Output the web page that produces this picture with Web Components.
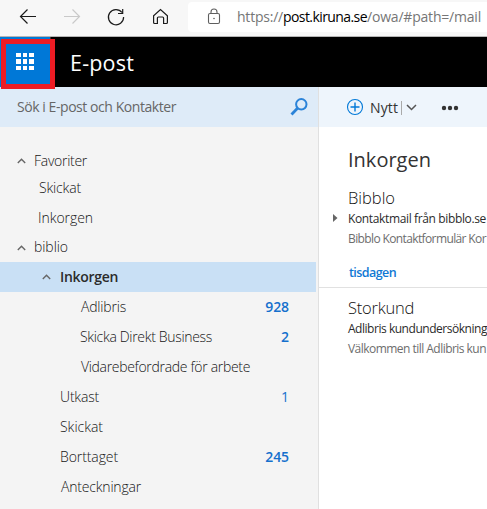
<!DOCTYPE html>
<html lang="sv">
<head>
<meta charset="utf-8">
<title>E-post</title>
<style>
html,body{margin:0;height:100%;overflow:hidden;background:#fff}
body{font-family:"Open Sans","Noto Sans",sans-serif;font-size:14px;color:#333}
</style>
</head>
<body>
<mail-app></mail-app>
<script>
function define(name, html, after) {
  const t = document.createElement('template');
  t.innerHTML = html;
  customElements.define(name, class extends HTMLElement {
    connectedCallback() {
      if (this.shadowRoot) return;
      this.attachShadow({mode: 'open'}).appendChild(t.content.cloneNode(true));
      if (after) after(this, this.shadowRoot);
    }
  });
}

/* A single-line label whose tracking is adjusted to a set width. */
define('fit-text', `<style>:host{display:inline-block;white-space:pre;flex:none}</style><slot></slot>`, host => {
  const w = parseFloat(host.getAttribute('w'));
  const n = host.textContent.length;
  const natural = host.getBoundingClientRect().width;
  if (w && natural) host.style.letterSpacing = ((w - natural) / n).toFixed(3) + 'px';
});

define('browser-bar', `<style>
:host{display:flex;height:36px;background:#f7f7f7;border-bottom:1px solid #b5b5b5;box-sizing:content-box;overflow:hidden}
.nav{width:188px;flex:none}
.field{flex:none;width:330px;height:30px;margin-top:2px;background:#fff;border-radius:4px;display:flex;align-items:center;font-size:14px;color:#767676}
.lock{width:49px;height:30px;flex:none}
.dom{color:#000}
fit-text{position:relative;top:-1px}
</style>
<svg class="nav" height="36" viewBox="0 0 188 36" fill="none" stroke="#1b1b1b" stroke-width="1.2">
<path d="M36 16.500H20.500M27.500 9.500l-7 7 7 7"/>
<path d="M64 16.500h15.500M72.500 9.500l7 7-7 7" stroke="#c9c9c9"/>
<path d="M122 12.500A7.600 7.600 0 1 0 123.600 17M122.700 9v4.500h-4.700"/>
<path d="M153.600 22.500v-6.800l6.900-6.200 6.900 6.200v6.800q0 1-1 1h-2.800v-5.500q0-1-1-1h-4.200q-1 0-1 1v5.500h-2.800q-1 0-1-1z"/>
</svg>
<div class="field">
<svg class="lock" viewBox="0 0 49 30" fill="none" stroke="#5f5f5f" stroke-width="1.1"><rect x="20.500" y="11.500" width="11" height="10" rx="1.500"/><path d="M23 11.500V10a3 3 0 0 1 6 0v1.500"/><circle cx="26" cy="16.500" r=".8" fill="#5f5f5f" stroke="none"/></svg>
<fit-text w="46">https://</fit-text><fit-text class="dom" w="84">post.kiruna.se</fit-text><fit-text w="114">/owa/#path=/mail</fit-text>
</div>`);

define('app-header', `<style>
:host{display:flex;height:50px;background:#000;color:#fff;position:relative;z-index:1;align-items:center;font-size:21.500px}
.launch{width:50px;height:50px;background:#0078d7;border-right:1px solid #3b3632;flex:none;margin-right:19px}
.mark{position:absolute;left:1px;top:2px;width:44px;height:40px;border:5px solid #ed1c24}
</style>
<svg class="launch" viewBox="0 0 50 50" fill="#fff" shape-rendering="crispEdges">
<path d="M16 16h5v4h-5zM23 16h4v4h-4zM29 16h5v4h-5zM16 22h5v5h-5zM23 22h4v5h-4zM29 22h5v5h-5zM16 29h5v4h-5zM23 29h4v4h-4zM29 29h5v4h-5z"/></svg>
<fit-text w="64">E-post</fit-text><div class="mark"></div>`);

define('search-box', `<style>
:host{display:flex;height:40px;background:#deebf8;align-items:center;padding:0 10px 0 17px;justify-content:space-between;color:#666;box-sizing:border-box}
fit-text{padding-bottom:1px}
</style><fit-text w="159">Sök i E-post och Kontakter</fit-text>
<svg width="18" height="18" viewBox="0 0 18 18" fill="none" stroke="#2b83d8"><circle cx="11.300" cy="6.300" r="5.200" stroke-width="2"/><path d="M7.500 10.200L1.500 16.500" stroke-width="2.800"/></svg>`);

/* Folder row: attributes indent, w (label width), count, open, selected, h */
define('folder-row', `<style>
:host{display:flex;align-items:center;height:30px;box-sizing:border-box;margin-right:2px;padding-right:27px;font-weight:300;color:#151515}
:host([selected]){background:#c9e0f5;font-weight:600;color:#2b2b2b}
svg{width:9px;margin-right:8px;flex:none}
:host([selected]) svg{margin-right:9px}
.l,.count{padding-bottom:2px}
.count{margin-left:auto;color:#1570cd;font-weight:600}
.count.light{font-weight:400}
</style><svg height="6" viewBox="0 0 9 6" fill="none" stroke="#666" stroke-width="1.400"><path d="M.800 5L4.500 1.300 8.200 5"/></svg><span class="l"></span><span class="count"></span>`, (host, root) => {
  host.style.paddingLeft = host.getAttribute('indent') + 'px';
  if (host.hasAttribute('h')) host.style.height = host.getAttribute('h') + 'px';
  if (!host.hasAttribute('open')) root.querySelector('svg').remove();
  const f = document.createElement('fit-text');
  f.setAttribute('w', host.getAttribute('w'));
  f.textContent = host.getAttribute('label');
  root.querySelector('.l').appendChild(f);
  const c = root.querySelector('.count');
  const count = host.getAttribute('count') || '';
  if (count === '1') c.classList.add('light');
  if (count) {
    const n = document.createElement('fit-text');
    n.setAttribute('w', count.length * 7.9);
    n.textContent = count;
    c.appendChild(n);
  }
});

define('folder-pane', `<style>
:host{display:block;width:318px;flex:none;background:#f4f4f4;border-right:1px solid #e0e0e0}
nav{padding-top:22px}
</style><search-box></search-box><nav>
<folder-row open h="24" indent="17" w="53" label="Favoriter"></folder-row>
<folder-row indent="39" w="42" label="Skickat"></folder-row>
<folder-row indent="38" w="55" label="Inkorgen"></folder-row>
<folder-row open h="29" indent="17" w="34" label="biblio"></folder-row>
<folder-row open selected indent="42" w="58" label="Inkorgen"></folder-row>
<folder-row indent="81" w="45" label="Adlibris" count="928"></folder-row>
<folder-row indent="80" w="132" label="Skicka Direkt Business" count="2"></folder-row>
<folder-row indent="81" w="169" label="Vidarebefordrade för arbete"></folder-row>
<folder-row indent="60" w="39" label="Utkast" count="1"></folder-row>
<folder-row indent="60" w="43" label="Skickat"></folder-row>
<folder-row indent="60" w="58" label="Borttaget" count="245"></folder-row>
<folder-row indent="61" w="80" label="Anteckningar"></folder-row>
</nav>`);

define('tool-bar', `<style>
:host{display:flex;height:40px;background:#eef5fc;align-items:center;padding-left:27px;box-sizing:border-box}
svg{flex:none}.plus{margin-right:6px}
</style>
<svg class="plus" width="18" height="18" viewBox="0 0 18 18" fill="none" stroke="#0078d7"><circle cx="9" cy="9" r="7.500" stroke-width="1.100"/><path d="M9 4.500v9M4.500 9h9" stroke-width="1.400"/></svg>
<fit-text w="28">Nytt</fit-text>
<svg width="62" height="20" viewBox="398 97 62 20"><path d="M401.500 101v14" stroke="#aaa"/><path d="M407 105l4.500 4.500 4.500-4.500" fill="none" stroke="#555" stroke-width="1.500"/><g fill="#333"><circle cx="444" cy="108" r="2.200"/><circle cx="450" cy="108" r="2.200"/><circle cx="456" cy="108" r="2.200"/></g></svg>`);

define('mail-item', `<style>
:host{display:block;font-size:12px;color:#2b2b2b;position:relative}
div{height:20px;line-height:20px;padding-left:29px;white-space:nowrap}
.from{font-size:16.500px;height:23px;line-height:23px;font-weight:300;color:#111}
.prev{color:#6d6d6d}
svg{position:absolute;left:14px;top:28px}
:host(:not([thread])) svg{display:none}
</style><svg width="5" height="8" viewBox="0 0 5 8"><path d="M0 0l4.500 4L0 8z" fill="#666"/></svg>
<div class="from"><slot name="from"></slot></div><div class="sub"><slot name="subject"></slot></div><div class="prev"><slot name="preview"></slot></div>`);

define('message-list', `<style>
:host{display:block;flex:1;min-width:0;overflow:hidden;background:#fff}
h1{margin:0;font-size:20px;font-weight:400;line-height:30px;height:30px;padding:18px 0 0 29px;color:#333}
.first{margin-top:11px}
.day{height:34px;line-height:24px;margin-top:5px;padding:7px 0 0 30px;box-sizing:border-box;font-size:12.500px;font-weight:600;color:#0f78d4;border-bottom:1px solid #e1e1e1}
.second{margin-top:8px}
</style><tool-bar></tool-bar>
<h1><fit-text w="83">Inkorgen</fit-text></h1>
<mail-item class="first" thread><fit-text slot="from" w="47">Bibblo</fit-text><fit-text slot="subject" w="138">Kontaktmail från bibblo.se</fit-text><fit-text slot="preview" w="138">Bibblo Kontaktformulär Kor</fit-text></mail-item>
<div class="day"><fit-text w="47">tisdagen</fit-text></div>
<mail-item class="second"><fit-text slot="from" w="66">Storkund</fit-text><fit-text slot="subject" w="139">Adlibris kundundersökning</fit-text><fit-text slot="preview" w="138">Välkommen till Adlibris kun</fit-text></mail-item>`);

define('mail-app', `<style>
:host{display:flex;flex-direction:column;height:100vh;overflow:hidden}
main{display:flex;flex:1;min-height:0}
</style><browser-bar></browser-bar><app-header></app-header><main><folder-pane></folder-pane><message-list></message-list></main>`);
</script>
</body>
</html>
